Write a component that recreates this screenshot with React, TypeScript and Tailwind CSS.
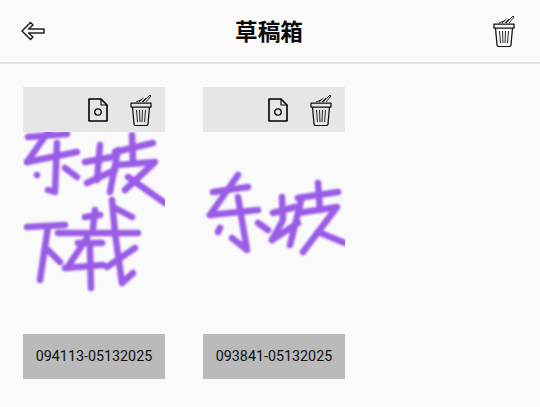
const drawingOne = [
  'M5 5 L44 2', 'M30 -7 L4 30', 'M4 30 L54 20', 'M34 11 L32 60 L25 58', 'M14 43 L14 43', 'M42 36 L54 45',
  'M62 30 L89 25', 'M77 13 L74 48', 'M64 51 L92 38', 'M92 20 L130 11', 'M95 18 L87 60', 'M109 3 L110 31',
  'M94 33 L132 30 L102 58', 'M105 45 L142 71',
  'M4 95 L42 93', 'M25 95 L17 148', 'M25 118 L37 130',
  'M35 101 L115 101', 'M62 85 L77 83', 'M72 78 L70 96', 'M89 68 L92 101 L99 151 L110 141', 'M92 76 L109 85',
  'M112 116 L84 135', 'M55 111 L79 111', 'M64 106 L44 136', 'M42 136 L80 133', 'M67 115 L68 156',
]

const drawingTwo = [
  'M10 60 L45 55', 'M35 43 L7 83', 'M7 83 L55 78', 'M35 65 L44 118 L29 106', 'M15 100 L17 96', 'M55 91 L65 98',
  'M70 81 L92 75', 'M79 65 L80 88 L69 108', 'M69 108 L95 91', 'M95 66 L135 60', 'M99 65 L87 113', 'M115 51 L117 78',
  'M95 81 L134 75 L100 120', 'M115 100 L142 111',
]

function BackArrow() {
  return (
    <svg width="24" height="20" viewBox="0 0 24 20" fill="none" stroke="#222" strokeWidth="1.5" strokeLinejoin="round">
      <path d="M1 10 L9.5 1.5 L12 4 L7.5 8 L23 8 L23 12 L7.5 12 L12 16 L9.5 18.5 Z" />
    </svg>
  )
}

function DocIcon() {
  return (
    <svg width="20" height="24" viewBox="0 0 20 24" fill="none" stroke="#000" strokeWidth="1.6" strokeLinejoin="round">
      <path d="M1 1 L13 1 L19 7 L19 23 L1 23 Z" />
      <path d="M13 1 L13 7 L19 7" strokeWidth="1.1" />
      <circle cx="10" cy="14" r="3.2" strokeWidth="1.3" />
    </svg>
  )
}

function TrashIcon() {
  return (
    <svg width="22" height="32" viewBox="0 0 22 32" fill="none" stroke="#111" strokeWidth="1.25" strokeLinejoin="round">
      <path d="M1 9 L21 9 L21 13 L1 13 Z" />
      <path d="M2.5 13 L4 30 Q4 31.5 6 31.5 L16 31.5 Q18 31.5 18 30 L19.5 13" />
      <path d="M6.5 16 L7.5 28 M9.5 16 L10 28 M12.5 16 L12 28 M15.5 16 L14.5 28" strokeWidth="0.9" />
      <path d="M6 8 L12 5.5 M9 8 L13.5 4 M12 8 L16 4 M13 8 L20 1 L21 2 L16 8" strokeWidth="0.9" />
    </svg>
  )
}

function DraftCard({ strokes, name }: { strokes: string[]; name: string }) {
  return (
    <div className="w-[142px] flex flex-col">
      <div className="h-[45px] bg-[#e6e6e6] flex items-center justify-end gap-[22px] pr-[13px] pt-[1px]">
        <DocIcon />
        <TrashIcon />
      </div>
      <svg width="142" height="202" viewBox="0 0 142 202" fill="none" className="block">
        <defs>
          <filter id="soft" x="-10%" y="-10%" width="120%" height="120%">
            <feGaussianBlur stdDeviation="1" />
          </filter>
        </defs>
        <g stroke="#9a5ce6" strokeWidth="6.5" strokeLinecap="round" strokeLinejoin="round" filter="url(#soft)">
          {strokes.map((d, i) => (
            <path key={i} d={d} />
          ))}
        </g>
      </svg>
      <div className="h-[45px] bg-[#bababa] flex items-center justify-center text-[14.3px] text-[#111] font-['Roboto',sans-serif]">
        {name}
      </div>
    </div>
  )
}

export default function App() {
  return (
    <div className="w-[540px] h-[407px] bg-[#fafafa] overflow-hidden flex flex-col">
      <div className="h-[64px] shrink-0 border-b-2 border-[#e4e4e4] flex items-center justify-between pl-[21px] pr-[25px]">
        <BackArrow />
        <span className="text-[22.6px] leading-none font-bold text-[#0a0a0a] font-['Noto_Sans_CJK_SC',sans-serif]">草稿箱</span>
        <TrashIcon />
      </div>
      <div className="flex gap-[38px] pl-[23px] pt-[23px]">
        <DraftCard strokes={drawingOne} name="094113-05132025" />
        <DraftCard strokes={drawingTwo} name="093841-05132025" />
      </div>
    </div>
  )
}
